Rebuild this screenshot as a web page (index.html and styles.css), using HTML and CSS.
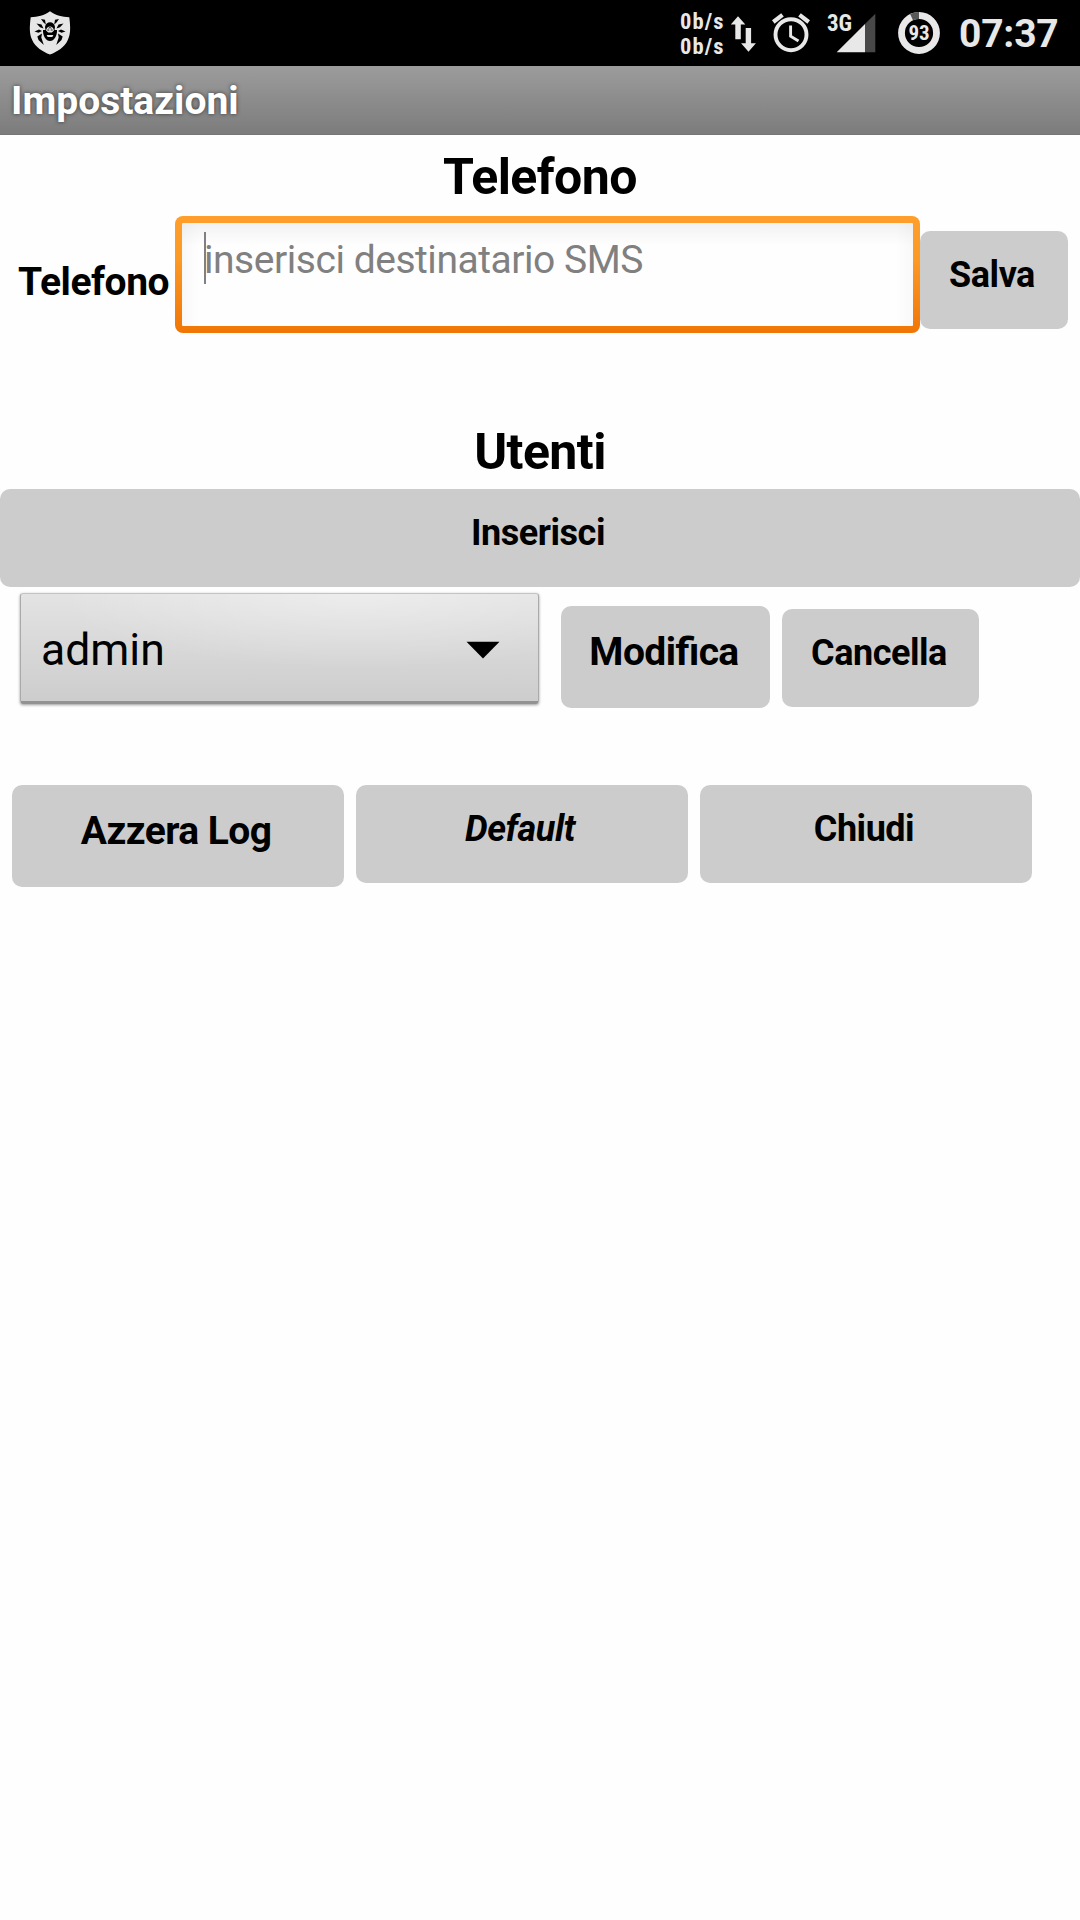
FILE: index.html
```html
<!DOCTYPE html>
<html lang="it">
<head>
<meta charset="utf-8">
<title>Impostazioni</title>
<link rel="stylesheet" href="styles.css">
</head>
<body>
<header class="status-bar">
  <svg class="shield" width="42" height="46" viewBox="29 10 42 46">
    <path fill="#e6e6e6" d="M50 11.3 C56 15.5 62 17 69.3 17.2 C70.6 28 70.6 34 67.8 40 C64.500 47.500 57.500 51.500 50 54.600 C42.500 51.500 35.500 47.500 32.200 40 C29.400 34 29.400 28 30.700 17.200 C38 17 44 15.500 50 11.300 Z"/>
    <path d="M45 27 C45.500 23.800 47.500 22.300 50 22.300 C52.500 22.300 54.500 23.800 55 27 L54.500 30 L57 30 C57.300 36 54 41 50 41 C46 41 42.700 36 43 30 L45.500 30 Z"/>
    <path d="M41 19 L45 19.800 L45.800 24.500 L43.500 22.500 Z M59 19 L55 19.800 L54.200 24.500 L56.500 22.500 Z M36.500 23.500 L41.500 24.500 L43.500 28.500 L40 27.200 Z M63.500 23.500 L58.500 24.500 L56.500 28.500 L60 27.200 Z M34.500 31.500 L39 29.500 L42 31 L38.500 32.800 Z M65.500 31.500 L61 29.500 L58 31 L61.500 32.800 Z M42 33.500 L37.300 36.500 L38.500 40 L43.800 45 L41.300 37.500 Z M58 33.500 L62.700 36.500 L61.500 40 L56.200 45 L58.700 37.500 Z"/>
    <path fill="#e6e6e6" d="M46 30.500 C46.500 27.800 48.200 26.600 50 26.600 C51.800 26.600 53.500 27.800 54 30.500 L51.800 32.500 H48.200 Z M46.600 35 H53.400 L52.300 37 H47.700 Z"/>
    <path fill="none" stroke="#000" stroke-width=".9" d="M47.300 30 H49.300 M50.700 30 H52.700 M48.500 28.200 Q50 27 51.500 28.200"/>
  </svg>
  <div class="traffic"><span>0b/s</span><span>0b/s</span></div>
  <svg class="arrows" width="26" height="38" viewBox="731 15 26 38">
    <path fill="#e8e8e8" d="M738 16.300 L745.300 24.500 H740.800 V39.300 H735.300 V24.500 H730.800 Z M745.700 28 H751.100 V43.300 H755.900 L748.500 51.700 L741.100 43.300 H745.700 Z"/>
  </svg>
  <svg class="alarm" width="40" height="42" viewBox="771 12 40 42" fill="none" stroke="#e8e8e8">
    <circle cx="791" cy="34.700" r="15.500" stroke-width="3.900"/>
    <path stroke-width="4.200" d="M773.300 22 L782.500 14.800 M799.500 14.800 L808.700 22"/>
    <path stroke-width="2.900" d="M790.600 25.500 V36.200 L798.500 41"/>
  </svg>
  <div class="signal">
    <span class="network">3G</span>
    <svg width="40" height="40" viewBox="836 13 40 40">
      <path fill="#484848" d="M865 24 L875.300 13.700 V52.300 H865 Z"/>
      <path fill="#e8e8e8" d="M836.700 52.300 L865 24 V52.300 Z"/>
    </svg>
  </div>
  <div class="battery">
    <svg width="42" height="42" viewBox="0 0 42 42" fill="none" stroke-width="6.800">
      <circle cx="21" cy="21" r="17.500" stroke="#e8e8e8"/>
      <path stroke="#585858" d="M13.550 5.160 A17.500 17.500 0 0 1 21 3.500"/>
    </svg>
    <span class="level">93</span>
  </div>
  <time class="clock">07:37</time>
</header>

<h1 class="title-bar">Impostazioni</h1>

<main>
  <section>
    <h2 class="heading">Telefono</h2>
    <div class="phone-row">
      <span class="label">Telefono</span>
      <div class="field"><span class="cursor"></span><span class="placeholder">inserisci destinatario SMS</span></div>
      <button class="btn save">Salva</button>
    </div>
  </section>

  <section class="users">
    <h2 class="heading">Utenti</h2>
    <button class="btn insert">Inserisci</button>
    <div class="user-row">
      <div class="spinner">
        <span>admin</span>
        <svg width="34" height="18" viewBox="0 0 34 18"><path d="M0.500 0.800 H33.500 L17 17.500 Z"/></svg>
      </div>
      <button class="btn large edit">Modifica</button>
      <button class="btn delete">Cancella</button>
    </div>
  </section>

  <div class="actions">
    <button class="btn large">Azzera Log</button>
    <button class="btn italic">Default</button>
    <button class="btn">Chiudi</button>
  </div>
</main>
</body>
</html>
```

FILE: styles.css
```css
* { box-sizing: border-box; }

body {
  margin: 0;
  width: 1080px;
  height: 1920px;
  overflow: hidden;
  background: #fefefe;
  color: #000;
  font-family: Roboto, "Liberation Sans", sans-serif;
}

svg { display: block; flex: none; }

/* Status bar */
.status-bar {
  display: flex;
  align-items: flex-start;
  height: 66px;
  padding-left: 29px;
  background: #000;
  color: #e8e8e8;
}

.shield { margin-top: 10px; }

.traffic {
  display: flex;
  flex-direction: column;
  width: 46px;
  margin: 9px 0 0 609px;
  font: bold 22.5px/24.5px "Roboto Condensed", Roboto, sans-serif;
  letter-spacing: 1.100px;
}

.arrows { margin: 15px 0 0 5px; }
.alarm { margin: 12px 0 0 14px; }

.signal {
  position: relative;
  margin: 13px 0 0 25px;
}

.network {
  position: absolute;
  left: -9px;
  top: -1px;
  font: bold 23px/24px "Roboto Condensed", Roboto, sans-serif;
}

.battery {
  position: relative;
  margin: 12px 0 0 22px;
}

.level {
  position: absolute;
  inset: 0;
  font: bold 21px/43px "Roboto Condensed", Roboto, sans-serif;
  text-align: center;
}

.clock {
  margin: 0 0 0 19px;
  font-size: 39px;
  font-weight: 700;
  line-height: 69px;
  letter-spacing: -.200px;
}

/* Title bar */
.title-bar {
  margin: 0;
  height: 69px;
  padding-left: 11px;
  background: linear-gradient(#9c9c9c, #7c7c7c);
  border-bottom: 1px solid #757575;
  color: #fff;
  font-size: 39px;
  line-height: 70px;
  text-shadow: 0 0 4px rgba(0, 0, 0, .6);
}

/* Form */
.heading {
  margin: 0;
  height: 80px;
  padding-top: 12px;
  font-size: 50px;
  line-height: 60px;
  letter-spacing: -.57px;
  text-align: center;
}

.phone-row {
  display: flex;
  align-items: flex-start;
  height: 195px;
}

.label {
  width: 175px;
  padding: 44px 0 0 18px;
  font-size: 39px;
  font-weight: bold;
  line-height: 46px;
  letter-spacing: -.45px;
}

.field {
  display: flex;
  align-items: flex-start;
  width: 745px;
  height: 117px;
  margin-top: 1px;
  padding: 9px 0 0 22px;
  border: 7px solid transparent;
  border-radius: 8px;
  background:
    linear-gradient(90deg, rgba(0, 0, 0, .025), transparent 18px, transparent 713px, rgba(0, 0, 0, .025)) padding-box,
    linear-gradient(#f2f2f3, #fefefe 22px) padding-box,
    linear-gradient(#ff9e2b, #fd9a26 35%, #f07605) border-box;
}

.cursor {
  width: 1.500px;
  height: 52px;
  background: #808080;
}

.placeholder {
  margin-left: -1.500px;
  color: #808080;
  font-size: 39px;
  line-height: 56px;
  letter-spacing: -.46px;
}

.btn {
  display: flex;
  justify-content: center;
  height: 98px;
  padding: 23px 4px 0 0;
  border: 0;
  border-radius: 10px;
  background: #ccc;
  color: #000;
  font: bold 36px/42px Roboto, "Liberation Sans", sans-serif;
  letter-spacing: -.47px;
}

.btn.large {
  height: 102px;
  font-size: 39px;
  line-height: 46px;
  letter-spacing: -.58px;
}

.btn.italic { font-style: italic; }

.save { width: 148px; margin-top: 16px; }
.insert { width: 100%; }

.users .heading { height: 79px; }

.user-row {
  display: flex;
  align-items: flex-start;
  height: 198px;
  padding-left: 20px;
}

.spinner {
  display: flex;
  align-items: center;
  justify-content: space-between;
  width: 519px;
  height: 111px;
  margin-top: 6px;
  padding: 4px 38px 0 20px;
  border: 1px solid #c4c4c4;
  border-left-color: #aaa;
  border-right-color: #aaa;
  border-bottom: 3px solid #929292;
  border-radius: 3px;
  background:
    radial-gradient(ellipse 300px 75px at 65% 0, rgba(255, 255, 255, .35), transparent),
    linear-gradient(#e3e3e3, #cdcdcd);
  box-shadow: 0 1px 3px rgba(0, 0, 0, .4);
  font-size: 44.5px;
}

.edit {
  width: 209px;
  margin: 19px 0 0 22px;
  padding-right: 3px;
  font-feature-settings: "liga" 1;
}

.delete {
  width: 197px;
  margin: 22px 0 0 12px;
  padding-right: 3px;
}

.actions {
  display: grid;
  grid-template-columns: repeat(3, 332px);
  align-items: start;
  gap: 12px;
  padding-left: 12px;
}
```
